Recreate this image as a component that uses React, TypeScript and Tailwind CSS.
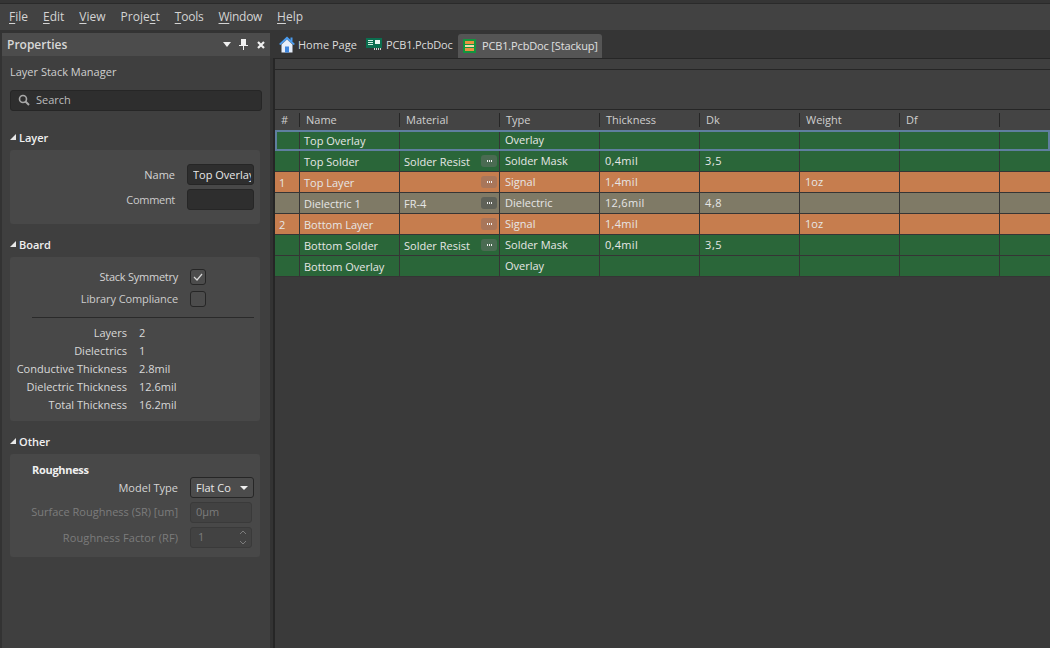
const font = "font-['Open_Sans','Noto_Sans',sans-serif]";

const Home = () => (
  <svg width="16" height="17" viewBox="0 0 16 17" className="shrink-0">
    <path d="M8 0.5 L16 8 L14.5 9 L8 3.5 L1.5 9 L0 8 Z" fill="#4a9cf0" />
    <path d="M2.5 8.5 L8 3.5 L13.5 8.5 V16.5 H2.5 Z" fill="#e6eefa" />
    <rect x="6" y="10.5" width="4" height="6" fill="#3f86dd" />
    <rect x="11.5" y="1.5" width="2" height="4" fill="#4a9cf0" />
  </svg>
);

const PcbIcon = () => (
  <svg width="16" height="12" viewBox="0 0 16 12" className="shrink-0">
    <rect width="16" height="10" fill="#0b6e4f" />
    <rect x="2" y="2" width="5" height="1" fill="#d5efe4" />
    <rect x="2" y="4" width="5" height="1" fill="#d5efe4" />
    <rect x="2" y="6" width="5" height="1" fill="#d5efe4" />
    <rect x="9" y="2" width="5" height="4" fill="#e8f5ef" />
    <rect x="8" y="10" width="1" height="2" fill="#cfd8d4" />
    <rect x="10" y="10" width="1" height="2" fill="#cfd8d4" />
    <rect x="12" y="10" width="1" height="2" fill="#cfd8d4" />
    <rect x="14" y="10" width="1" height="2" fill="#cfd8d4" />
  </svg>
);

const StackIcon = () => (
  <svg width="13" height="14" viewBox="0 0 13 14" className="shrink-0">
    <rect width="13" height="14" fill="#12953f" />
    <rect x="2" y="2" width="9" height="3" fill="#e8913f" />
    <rect x="2" y="6" width="9" height="2" fill="#f4d9a8" />
    <rect x="2" y="9" width="9" height="3" fill="#e8913f" />
  </svg>
);

const U = ({ children }: { children: string }) => <span className="underline underline-offset-2">{children}</span>;

const Menu = () => (
  <div className="h-[27px] flex items-center pl-[9px] gap-[15px] text-[12px] text-[#d4d4d4] bg-[#424242] border-t border-[#2a2a2a] mt-[3px] shrink-0">
    <span><U>F</U>ile</span>
    <span><U>E</U>dit</span>
    <span><U>V</U>iew</span>
    <span>Proje<U>c</U>t</span>
    <span className="tracking-[-0.2px]"><U>T</U>ools</span>
    <span className="tracking-[-0.3px]"><U>W</U>indow</span>
    <span><U>H</U>elp</span>
  </div>
);

const Caret = () => <span className="w-0 h-0 border-l-[6px] border-l-transparent border-b-[6px] border-b-[#e8e8e8] shrink-0" />;

const Section = ({ title, className, children }: { title: string; className: string; children: React.ReactNode }) => (
  <div className={className}>
    <div className="flex items-center gap-[3px] h-[16px] pl-[8px] text-[11px] font-semibold text-[#f0f0f0]">
      <Caret />
      <span className="translate-y-px">{title}</span>
    </div>
    <div className="ml-[8px] mr-[10px] mt-[5px] rounded-[3px] bg-[#484848]">{children}</div>
  </div>
);

const StatRow = ({ k, v }: { k: string; v: string }) => (
  <div className="flex h-[18px] items-center">
    <div className="w-[117px] text-right text-[#d8d8d8]">{k}</div>
    <div className="ml-[12px] text-[#d8d8d8]">{v}</div>
  </div>
);

const Panel = () => (
  <div className="w-[268px] ml-[2px] mt-[3px] shrink-0 flex flex-col bg-[#3f3f3f]">
    <div className="h-[23px] bg-[#4c4c4c] flex items-center pl-[5px] pr-[5px] shrink-0">
      <span className="text-[12px] font-semibold text-[#d8d8d8] flex-1">Properties</span>
      <span className="w-0 h-0 border-l-[4px] border-r-[4px] border-t-[5px] border-l-transparent border-r-transparent border-t-[#f0f0f0]" />
      <svg width="9" height="11" viewBox="0 0 9 11" className="ml-[8px]">
        <path d="M2 0H7V6H9V7H5V11H4V7H0V6H2Z" fill="#f0f0f0" />
      </svg>
      <svg width="8" height="8" viewBox="0 0 8 8" className="ml-[9px]">
        <path d="M1 1L7 7M7 1L1 7" stroke="#f0f0f0" strokeWidth="2.2" />
      </svg>
    </div>
    <div className="pl-[8px] mt-[9px] h-[15px] flex items-center text-[#cfcfcf]">Layer Stack Manager</div>
    <div className="mx-[8px] mt-[10px] h-[21px] rounded-[3px] bg-[#2e2e2e] border border-[#262626] flex items-center pl-[7px] gap-[6px] pb-px text-[#bdbdbd]">
      <svg width="12" height="12" viewBox="0 0 12 12" className="shrink-0">
        <circle cx="5" cy="5" r="3.5" fill="none" stroke="#a8a8a8" strokeWidth="1.6" />
        <path d="M7.5 7.5L11 11" stroke="#a8a8a8" strokeWidth="2" />
      </svg>
      Search
    </div>

    <Section title="Layer" className="mt-[18px]">
      <div className="h-[74px] pt-[14px] flex flex-col gap-[4px]">
        <div className="flex items-center justify-end pr-[6px] h-[21px]">
          <span className="text-[#d4d4d4] mr-[12px] translate-y-px">Name</span>
          <div className="w-[67px] h-[21px] bg-[#2e2e2e] border border-[#262626] rounded-[3px] pl-[5px] overflow-hidden whitespace-nowrap text-[#e8e8e8] leading-[19px]">
            <div className="w-[58px] overflow-hidden">Top Overlay</div>
          </div>
        </div>
        <div className="flex items-center justify-end pr-[6px] h-[21px]">
          <span className="text-[#cccccc] mr-[12px] translate-y-px tracking-[-0.3px]">Comment</span>
          <div className="w-[67px] h-[21px] bg-[#2e2e2e] border border-[#262626] rounded-[3px]" />
        </div>
      </div>
    </Section>

    <Section title="Board" className="mt-[12px]">
      <div className="h-[164px] pt-[12px]">
        <div className="flex items-center justify-end h-[16px] pr-[54px]">
          <span className="text-[#d4d4d4] mr-[12px] tracking-[-0.25px]">Stack Symmetry</span>
          <span className="w-[16px] h-[16px] rounded-[3px] bg-[#4c4c4c] border border-[#262626] flex items-center justify-center">
            <svg width="10" height="8" viewBox="0 0 10 8">
              <path d="M1 4L4 7L9 1" fill="none" stroke="#d8d8d8" strokeWidth="1.2" />
            </svg>
          </span>
        </div>
        <div className="flex items-center justify-end h-[16px] mt-[6px] pr-[54px]">
          <span className="text-[#cccccc] mr-[12px] tracking-[-0.1px]">Library Compliance</span>
          <span className="w-[16px] h-[16px] rounded-[3px] bg-[#4c4c4c] border border-[#262626]" />
        </div>
        <div className="h-px bg-[#2a2a2a] ml-[22px] mr-[6px] mt-[10px] mb-[6px]" />
        <StatRow k="Layers" v="2" />
        <StatRow k="Dielectrics" v="1" />
        <StatRow k="Conductive Thickness" v="2.8mil" />
        <StatRow k="Dielectric Thickness" v="12.6mil" />
        <StatRow k="Total Thickness" v="16.2mil" />
      </div>
    </Section>

    <Section title="Other" className="mt-[12px]">
      <div className="h-[103px] pt-[8px]">
        <div className="pl-[22px] h-[15px] text-[11px] font-bold text-[#f0f0f0] flex items-center tracking-[-0.3px] translate-y-px">Roughness</div>
        <div className="flex items-center justify-end h-[21px] pr-[6px]">
          <span className="text-[#d4d4d4] mr-[12px] translate-y-px">Model Type</span>
          <div className="w-[64px] h-[21px] rounded-[3px] bg-[#4c4c4c] border border-[#262626] flex items-center pl-[5px] text-[#e8e8e8]">
            <span className="flex-1 translate-y-px">Flat Co</span>
            <span className="mr-[5px] w-0 h-0 border-l-[4px] border-r-[4px] border-t-[4px] border-l-transparent border-r-transparent border-t-[#f0f0f0]" />
          </div>
        </div>
        <div className="flex items-center justify-end h-[21px] pr-[8px] mt-[4px]">
          <span className="text-[#7c7c7c] mr-[12px]">Surface Roughness (SR) [um]</span>
          <div className="w-[62px] h-[21px] rounded-[3px] bg-[#424242] border border-[#3a3a3a] flex items-center pl-[5px] text-[#7c7c7c]">0µm</div>
        </div>
        <div className="flex items-center justify-end h-[21px] pr-[8px] mt-[4px]">
          <span className="text-[#7c7c7c] mr-[12px] translate-y-px tracking-[0.1px]">Roughness Factor (RF)</span>
          <div className="w-[62px] h-[21px] rounded-[3px] bg-[#424242] border border-[#3a3a3a] flex items-center pl-[7px] text-[#7c7c7c]">
            <span className="flex-1">1</span>
            <svg width="8" height="15" viewBox="0 0 8 15" className="mr-[4px]">
              <path d="M1 4L4 1L7 4M1 11L4 14L7 11" fill="none" stroke="#7c7c7c" />
            </svg>
          </div>
        </div>
      </div>
    </Section>
  </div>
);

const Tabs = () => (
  <div className="h-[28px] flex items-center bg-[#353535] text-[#dcdcdc] shrink-0">
    <div className="flex items-center gap-[3px] pl-[9px] w-[96px]">
      <Home />
      <span className="translate-y-px">Home Page</span>
    </div>
    <div className="flex items-center gap-[4px] w-[92px]">
      <PcbIcon />
      <span className="translate-y-px tracking-[-0.15px]">PCB1.PcbDoc</span>
    </div>
    <div className="h-[24px] self-end w-[144px] bg-[#555555] rounded-t-[3px] flex items-center gap-[6px] pl-[5px] text-[#e0e0e0]">
      <StackIcon />
      <span className="tracking-[-0.15px]">PCB1.PcbDoc [Stackup]</span>
    </div>
  </div>
);

const cols = [
  { name: "#", w: "w-[25px]" },
  { name: "Name", w: "w-[100px]" },
  { name: "Material", w: "w-[100px]" },
  { name: "Type", w: "w-[100px]" },
  { name: "Thickness", w: "w-[100px]" },
  { name: "Dk", w: "w-[100px]" },
  { name: "Weight", w: "w-[100px]" },
  { name: "Df", w: "w-[100px]" },
];

type Row = { n?: string; name: string; mat?: string; btn?: boolean; type: string; th?: string; dk?: string; w?: string; kind: "g" | "o" | "d"; sel?: boolean };

const rows: Row[] = [
  { name: "Top Overlay", type: "Overlay", kind: "g", sel: true },
  { name: "Top Solder", mat: "Solder Resist", btn: true, type: "Solder Mask", th: "0,4mil", dk: "3,5", kind: "g" },
  { n: "1", name: "Top Layer", btn: true, type: "Signal", th: "1,4mil", w: "1oz", kind: "o" },
  { name: "Dielectric 1", mat: "FR-4", btn: true, type: "Dielectric", th: "12,6mil", dk: "4,8", kind: "d" },
  { n: "2", name: "Bottom Layer", btn: true, type: "Signal", th: "1,4mil", w: "1oz", kind: "o" },
  { name: "Bottom Solder", mat: "Solder Resist", btn: true, type: "Solder Mask", th: "0,4mil", dk: "3,5", kind: "g" },
  { name: "Bottom Overlay", type: "Overlay", kind: "g" },
];

const rowBg = { g: "bg-[#2a6639]", o: "bg-[#c67d4e]", d: "bg-[#7f7a66]" };
const btnBg = { g: "bg-[#4a6b52]", o: "bg-[#a8765a]", d: "bg-[#5f6158]" };

const Cell = ({ w, children, className = "" }: { w: string; children?: React.ReactNode; className?: string }) => (
  <div className={`${w} h-full shrink-0 flex items-center border-r border-[#353535] whitespace-nowrap ${className}`}>{children}</div>
);

const TableRow = ({ r }: { r: Row }) => {
  const nudge = r.sel ? "" : "translate-y-px";
  return (
    <div className={`h-[21px] flex text-[#e6e6e6] ${rowBg[r.kind]} ${r.sel ? "border-2 border-[#5f7f9f]" : "border-b border-[#353535]"}`}>
      <Cell w={r.sel ? "w-[23px]" : "w-[25px]"} className="pl-[4px]"><span className={nudge}>{r.n}</span></Cell>
      <Cell w="w-[100px]" className="pl-[4px]"><span className={`pt-px ${nudge}`}>{r.name}</span></Cell>
      <Cell w="w-[100px]" className="pl-[4px] justify-between pr-[2px]">
        <span className={`pt-px ${nudge}`}>{r.mat}</span>
        {r.btn && (
          <span className={`w-[16px] h-[12px] rounded-[3px] ${btnBg[r.kind]} flex items-center justify-center gap-px`}>
            <i className="w-px h-[2px] bg-[#f0f0f0]" />
            <i className="w-px h-[2px] bg-[#f0f0f0]" />
            <i className="w-px h-[2px] bg-[#f0f0f0]" />
          </span>
        )}
      </Cell>
      <Cell w="w-[100px]" className="pl-[5px]"><span className={`pb-px ${nudge}`}>{r.type}</span></Cell>
      <Cell w="w-[100px]" className="pl-[5px] tracking-[0.3px]"><span className={`pb-px ${nudge}`}>{r.th}</span></Cell>
      <Cell w="w-[100px]" className="pl-[5px] tracking-[0.6px]"><span className={`pb-px ${nudge}`}>{r.dk}</span></Cell>
      <Cell w="w-[100px]" className="pl-[5px]"><span className={`pb-px ${nudge}`}>{r.w}</span></Cell>
      <Cell w="w-[100px]" />
    </div>
  );
};

const Main = () => (
  <div className="flex-1 min-w-0 flex flex-col">
    <Tabs />
    <div className="flex-1 border-t border-l-2 border-[#262626] bg-[#3a3a3a] ml-[3px]">
      <div className="h-[11px] bg-[#3f3f3f] border-b border-[#262626]" />
      <div className="h-[40px] bg-[#404040] border-b border-[#262626]" />
      <div className="h-[20px] flex items-center bg-[#444444] text-[#cfcfcf]">
        {cols.map((c) => (
          <div key={c.name} className={`${c.w} h-[14px] shrink-0 flex items-center border-r border-[#262626] pl-[6px]`}>{c.name}</div>
        ))}
      </div>
      {rows.map((r) => (
        <TableRow key={r.name} r={r} />
      ))}
    </div>
  </div>
);

export default function App() {
  return (
    <div className={`${font} w-[1050px] h-[648px] overflow-hidden flex flex-col bg-[#353535] text-[11px]`}>
      <Menu />
      <div className="flex-1 flex min-h-0 bg-[#333333]">
        <Panel />
        <Main />
      </div>
    </div>
  );
}
